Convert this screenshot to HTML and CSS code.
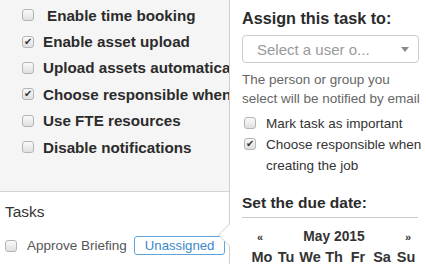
FILE: index.html
```html
<!DOCTYPE html>
<html lang="en">
<head>
  <meta charset="UTF-8" />
  <title>Task settings</title>
  <link rel="stylesheet" href="styles.css">
</head>
<body>
  <div class="page">
    <div class="settings">
      <div class="opt"><span class="cb"></span><span class="lbl first">Enable time booking</span></div>
      <div class="opt"><span class="cb on"></span><span class="lbl">Enable asset upload</span></div>
      <div class="opt"><span class="cb"></span><span class="lbl">Upload assets automatically</span></div>
      <div class="opt"><span class="cb on"></span><span class="lbl">Choose responsible when creating the job</span></div>
      <div class="opt"><span class="cb"></span><span class="lbl">Use FTE resources</span></div>
      <div class="opt"><span class="cb"></span><span class="lbl">Disable notifications</span></div>
    </div>

    <div class="tasks">
      <h3>Tasks</h3>
      <div class="task">
        <span class="cb"></span>
        <span class="task-name">Approve Briefing</span>
        <span class="badge">Unassigned</span>
      </div>
    </div>

    <div class="popover">
      <div class="arrow"></div>
      <h4 class="assign">Assign this task to:</h4>
      <div class="select">
        <span>Select a user o...</span>
        <span class="caret"></span>
      </div>
      <p class="help">The person or group you select will be notified by email</p>
      <div class="check first"><span class="cb"></span><span>Mark task as important</span></div>
      <div class="check"><span class="cb on"></span><span>Choose responsible when creating the job</span></div>
      <h4 class="due">Set the due date:</h4>
      <div class="cal-head">
        <span class="nav">&laquo;</span>
        <span class="month">May 2015</span>
        <span class="nav">&raquo;</span>
      </div>
      <div class="days">
        <span>Mo</span><span>Tu</span><span>We</span><span>Th</span><span>Fr</span><span>Sa</span><span>Su</span>
      </div>
    </div>
  </div>
</body>
</html>
```

FILE: styles.css
```css
*{margin:0;padding:0;box-sizing:border-box;}
body{font-family:'Liberation Sans',Arial,sans-serif;color:#333;background:#fff;overflow:hidden;}
.page{position:relative;width:426px;height:264px;overflow:hidden;}

.cb{display:inline-block;flex:none;width:12px;height:12px;border:1px solid #b5b5b5;border-radius:3px;background:linear-gradient(#fafafa,#e0e0e0);position:relative;}
.cb.on::after{content:'\2714';position:absolute;left:1px;top:-2px;font-size:10px;line-height:14px;color:#333;}

.settings{width:229px;height:192px;background:#f5f5f5;border-bottom:1px solid #d4d4d4;padding:2px 0 0 22px;}
.opt{display:flex;align-items:center;height:26.4px;white-space:nowrap;}
.opt .lbl{margin-left:9px;font-size:15.2px;font-weight:bold;color:#2b2b2b;}
.opt .lbl.first{margin-left:13px;}

.tasks{width:229px;padding:10px 0 0 5px;}
.tasks h3{font-size:15.5px;font-weight:normal;color:#333;line-height:20px;}
.task{display:flex;align-items:center;margin-top:14px;}
.task-name{margin-left:10px;font-size:13.5px;color:#555;}
.badge{margin-left:7px;border:1px solid #5fa3dc;border-radius:3px;color:#3a87c8;font-size:13.2px;padding:1px 10px 1px;line-height:15px;}

.popover{position:absolute;left:229px;top:-10px;width:210px;height:290px;background:#fff;border-left:1px solid #cfcfcf;padding:20px 8px 0 12px;}
.arrow{position:absolute;left:-12px;top:233px;width:0;height:0;border-top:12px solid transparent;border-bottom:12px solid transparent;border-right:12px solid #cfcfcf;}
.arrow::after{content:'';position:absolute;left:1px;top:-11px;border-top:11px solid transparent;border-bottom:11px solid transparent;border-right:11px solid #fff;}
.popover h4{font-size:15.5px;font-weight:bold;color:#2b2b2b;line-height:16px;}
.popover h4.assign{font-size:16.2px;}
.select{display:flex;justify-content:space-between;align-items:center;width:177px;height:28px;margin-top:9px;border:1px solid #ccc;border-radius:4px;padding:0 9px 0 14px;color:#9a9a9a;font-size:15px;}
.caret{border-left:4px solid transparent;border-right:4px solid transparent;border-top:5px solid #8a8a8a;}
.help{margin-top:8px;font-size:13.5px;line-height:18.5px;color:#666;width:178px;}
.check{display:flex;align-items:flex-start;font-size:13.5px;line-height:21px;color:#333;width:186px;}
.check.first{margin-top:5px;}
.check .cb{margin:4px 10px 0 2px;}
.due{margin-top:19px;padding-bottom:6px;border-bottom:1px solid #ccc;width:176px;}
.cal-head{display:flex;justify-content:space-between;align-items:center;width:176px;margin-top:11px;padding:0 7px 0 15px;font-size:13.8px;font-weight:bold;color:#333;}
.cal-head .nav{font-size:11px;}
.days{display:grid;grid-template-columns:repeat(7,24px);width:176px;margin-top:5px;padding-left:8px;font-size:14.5px;font-weight:bold;color:#333;}
.days span{text-align:center;}
```
